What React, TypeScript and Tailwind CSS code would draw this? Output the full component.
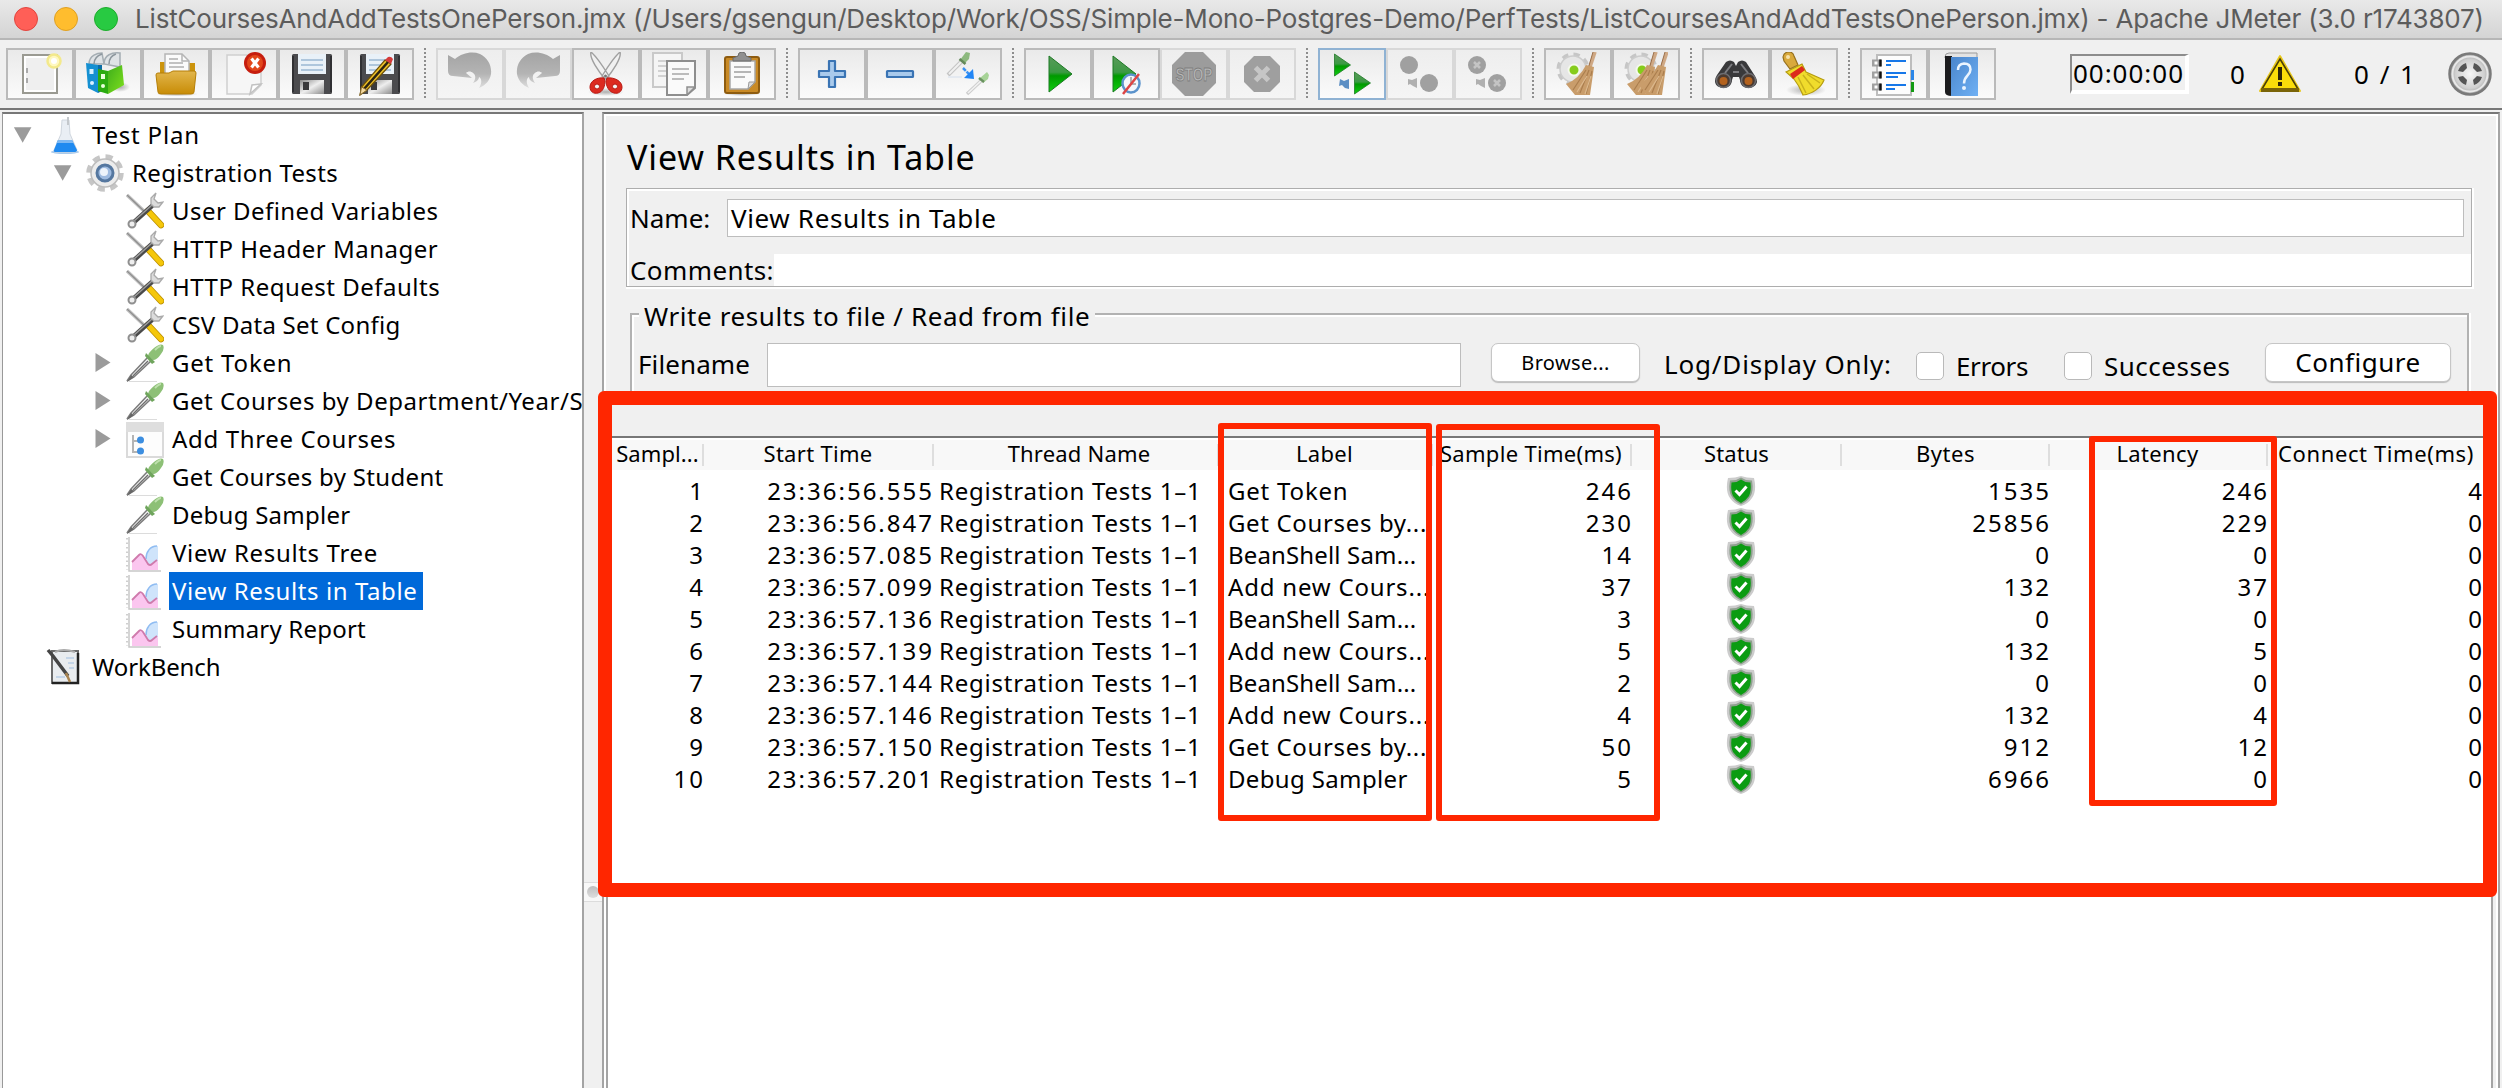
import React from 'react'
import type { ReactNode } from 'react'

/* ---------- shared gradients ---------- */
function Defs() {
  return (
    <svg className="absolute h-0 w-0" aria-hidden="true">
      <defs>
        <linearGradient id="green" x1="0" y1="0" x2="0" y2="1">
          <stop offset="0" stopColor="#5a9a5a" />
          <stop offset="0.45" stopColor="#3c9a44" />
          <stop offset="0.55" stopColor="#009a00" />
          <stop offset="1" stopColor="#10d010" />
        </linearGradient>
        <linearGradient id="folder" x1="0" y1="0" x2="0" y2="1">
          <stop offset="0" stopColor="#e2b64c" />
          <stop offset="1" stopColor="#c88c06" />
        </linearGradient>
        <linearGradient id="metal" x1="0" y1="0" x2="1" y2="1">
          <stop offset="0" stopColor="#8a8a8a" />
          <stop offset="0.5" stopColor="#eeeeee" />
          <stop offset="1" stopColor="#8c8c8c" />
        </linearGradient>
        <linearGradient id="arrowgray" x1="0" y1="0" x2="0" y2="1">
          <stop offset="0" stopColor="#a4a4a4" />
          <stop offset="0.6" stopColor="#b4b4b4" />
          <stop offset="1" stopColor="#dedede" />
        </linearGradient>
        <linearGradient id="book" x1="0" y1="0" x2="1" y2="1">
          <stop offset="0" stopColor="#4a86cc" />
          <stop offset="1" stopColor="#6fb0f4" />
        </linearGradient>
        <linearGradient id="binder" x1="0" y1="0" x2="1" y2="1">
          <stop offset="0" stopColor="#3fae1c" />
          <stop offset="1" stopColor="#7fe01c" />
        </linearGradient>
        <radialGradient id="ball">
          <stop offset="0" stopColor="#f6f6f6" />
          <stop offset="0.7" stopColor="#d0d0d0" />
          <stop offset="1" stopColor="#9a9a9a" />
        </radialGradient>
        <radialGradient id="shadow">
          <stop offset="0" stopColor="#000" stopOpacity="0.3" />
          <stop offset="1" stopColor="#000" stopOpacity="0" />
        </radialGradient>
      </defs>
    </svg>
  )
}

function Icon({ children }: { children: ReactNode }) {
  return (
    <svg viewBox="0 0 44 44" className="h-11 w-11" fill="none">
      {children}
    </svg>
  )
}

/* ---------- toolbar icons ---------- */
const NewIcon = () => (
  <Icon>
    <rect x="5" y="3" width="34" height="38" fill="#fff" stroke="#9a9a92" strokeWidth="2" />
    <rect x="8" y="6" width="28" height="32" fill="#efefef" />
    <path d="M9 16v5M9 26v5" stroke="#aaa" strokeWidth="2" />
    <circle cx="36" cy="9" r="6.500" fill="#fff8c0" stroke="#f3e98c" strokeWidth="2.500" />
    <circle cx="36" cy="9" r="3" fill="#fff" />
  </Icon>
)
const TemplatesIcon = () => (
  <Icon>
    <ellipse cx="34" cy="35" rx="10" ry="5" fill="url(#shadow)" />
    <path d="M3 12C3 3 12 1 16 1l2 11zM18 12C18 3 26 0 34 1v14z" fill="#dfe3e6" stroke="#a4adb3" strokeWidth="1.5" />
    <path d="M8 12c0-6 5-9 8-10M23 12c0-6 4-9 7-10" stroke="#8d979e" strokeWidth="1.5" />
    <path d="M0 11l12 2v28L2 36z" fill="#1590d2" />
    <path d="M12 13h4v26l-4 2z" fill="#0b6ca6" />
    <rect x="3.5" y="17" width="4" height="5" fill="#d8f0ff" />
    <circle cx="6" cy="31" r="2" fill="#d8f0ff" />
    <path d="M12 17l10 2v23l-10-3z" fill="#2cab10" />
    <path d="M22 19l14-6 2 20-16 9z" fill="url(#binder)" />
    <rect x="15" y="22" width="4" height="5" fill="#eaffdc" />
    <circle cx="17" cy="34" r="2" fill="#eaffdc" />
  </Icon>
)
const OpenIcon = () => (
  <Icon>
    <ellipse cx="23" cy="42" rx="21" ry="2.5" fill="url(#shadow)" />
    <path d="M6 10h7v4h22v-3h6v18H6z" fill="#cc940c" />
    <path d="M11 2h17l7 7v15H11z" fill="#fbfbfb" stroke="#b5b5b5" strokeWidth="1.5" />
    <path d="M28 2v7h7" stroke="#b5b5b5" strokeWidth="1.5" />
    <path d="M15 7h9M15 11h14M15 15h15" stroke="#b0b0b0" strokeWidth="1.6" />
    <path d="M2 23q0-2 2-2h11l4-2h21q2 0 2 2l-2 19q0 2-3 2H7q-3 0-3-2z" fill="url(#folder)" stroke="#b57f08" />
  </Icon>
)
const CloseIcon = () => (
  <Icon>
    <path d="M5 3h34v30l-9 9H5z" fill="#f6f6f6" stroke="#cfcfcf" strokeWidth="1.5" />
    <path d="M28 42l2-9 9-1z" fill="#fff" stroke="#c2c2c2" strokeWidth="1.5" />
    <circle cx="33" cy="11" r="11" fill="#c61d0e" />
    <circle cx="33" cy="11" r="8" fill="#e2471b" />
    <path d="M29.5 6.5l7 9M36.5 6.5l-7 9" stroke="#fff" strokeWidth="3.2" />
  </Icon>
)
const Floppy = () => (
  <>
    <rect x="2" y="2" width="40" height="40" rx="1.5" fill="#4b4b4e" />
    <path d="M3 4v36M41 4v36" stroke="#303033" strokeWidth="2" />
    <rect x="8" y="2" width="28" height="20" fill="#e9f1f8" />
    <path d="M11 8h22M11 13h22M11 18h22" stroke="#aec6dc" strokeWidth="1.8" />
    <rect x="10" y="28" width="24" height="14" fill="url(#metal)" />
    <rect x="13" y="30" width="6" height="8" fill="#3a3a3c" />
  </>
)
const SaveIcon = () => (
  <Icon>
    <Floppy />
  </Icon>
)
const SaveAsIcon = () => (
  <Icon>
    <Floppy />
    <path d="M27 8l6 4L9 38l-7 5 1.500-8z" fill="#f0c228" stroke="#6d5008" strokeWidth="1.2" />
    <path d="M30 10L6 37" stroke="#2c2410" strokeWidth="2.6" />
    <path d="M27 8l3-3q3-1 5 2l-2 5z" fill="#d63a3a" />
    <path d="M3.500 35L9 38l-7 5z" fill="#f3d9a0" stroke="#8a6c30" />
  </Icon>
)
const UndoShape = () => (
  <path
    d="M0 3l7 4C14 1 24-1 32 2c8 4 12 12 11 20-1 6-5 11-12 14 3-5 3-9 0-11 0 3-3 5-6 6 3-4 3-8 0-10-2-2-5-2-7 0l6 5L5 24Q0 24 0 19z"
    fill="url(#arrowgray)"
  />
)
const UndoIcon = () => (
  <Icon>
    <UndoShape />
  </Icon>
)
const RedoIcon = () => (
  <Icon>
    <g transform="translate(44 0) scale(-1 1)">
      <UndoShape />
    </g>
  </Icon>
)
const CutIcon = () => (
  <Icon>
    <ellipse cx="22" cy="40" rx="18" ry="4" fill="url(#shadow)" />
    <path d="M7 0c-2 6 8 20 14 27l4-3C20 16 13 5 7 0zM36 0c2 6-8 20-14 27l-4-3C23 16 30 5 36 0z" fill="#f1f1f1" stroke="#a0a0a0" strokeWidth="1.4" />
    <circle cx="21.500" cy="24" r="1.500" fill="#777" />
    <path d="M20 26c-7-1-14 3-14 9 0 5 4 7 8 6 5-1 7-7 7-12zM23 26c7-1 15 3 15 9 0 5-4 7-8 6-5-1-8-7-8-12z" fill="#dc2a20" stroke="#b81a14" />
    <circle cx="13" cy="34.500" r="2.500" fill="#f3f3f3" stroke="#b81a14" />
    <circle cx="31" cy="34.500" r="2.500" fill="#f3f3f3" stroke="#b81a14" />
  </Icon>
)
const CopyIcon = () => (
  <Icon>
    <rect x="1" y="1" width="29" height="34" fill="#f5f5f5" stroke="#c9c9c9" strokeWidth="2" />
    <path d="M6 9h18M6 14h18M6 19h10M6 24h10" stroke="#d2d2d2" strokeWidth="2" />
    <path d="M15 9h28v27l-8 7H15z" fill="#fafafa" stroke="#8e8e8e" strokeWidth="2" />
    <path d="M20 17h17M20 22h17M20 27h12" stroke="#bcbcbc" strokeWidth="2" />
    <path d="M35 43v-8h8z" fill="#dcdcdc" stroke="#8e8e8e" strokeWidth="1.500" />
  </Icon>
)
const PasteIcon = () => (
  <Icon>
    <ellipse cx="22" cy="42" rx="18" ry="2" fill="url(#shadow)" />
    <rect x="5" y="5" width="34" height="36" rx="2" fill="#c98a25" stroke="#8e5c10" strokeWidth="2" />
    <path d="M10 9h25v21l-7 7H10z" fill="#fafafa" stroke="#a8a8a8" strokeWidth="1.500" />
    <path d="M14 15h17M14 20h17M14 25h11" stroke="#b6b6b6" strokeWidth="2" />
    <path d="M28 37l1-7h6z" fill="#ddd" stroke="#9a9a9a" />
    <path d="M13 9V6l5-2q0-4 4-4t4 4l5 2v3z" fill="#909090" stroke="#6d6d6d" />
  </Icon>
)
const PlusIcon = () => (
  <Icon>
    <path d="M19 9h6v10h10v6H25v10h-6V25H9v-6h10z" fill="#a9caec" stroke="#3a74b4" strokeWidth="2.200" strokeLinejoin="round" />
  </Icon>
)
const MinusIcon = () => (
  <Icon>
    <rect x="9" y="19" width="26" height="6" rx="0.500" fill="#a9caec" stroke="#3a74b4" strokeWidth="2.200" />
  </Icon>
)
const ToggleIcon = () => (
  <Icon>
    <path d="M17 8L2 23" stroke="#c4c4c4" strokeWidth="4" />
    <path d="M17 8L3 22" stroke="#f0f0f0" strokeWidth="2" />
    <path d="M14 8l6-8 4 1-1 6-5 5z" fill="#8db97e" />
    <path d="M13.500 7l6 5" stroke="#64895a" strokeWidth="2.500" />
    <path d="M2 25h14" stroke="#e4e9f0" strokeWidth="2" />
    <path d="M17 16l7 7" stroke="#3d93f2" strokeWidth="2.500" strokeDasharray="4 1" />
    <path d="M28 27l-10-1 9-9z" fill="#2186f5" />
    <path d="M36 28L21 42" stroke="#cdcdcd" strokeWidth="3.500" />
    <path d="M36 28L22 41" stroke="#f2f2f2" strokeWidth="1.600" />
    <path d="M34 26l7-6 2 3-1 4-5 4z" fill="#a7d397" />
    <path d="M33 26l5 4" stroke="#6a9160" strokeWidth="2.500" />
  </Icon>
)
const StartIcon = () => (
  <Icon>
    <path d="M13 4l23 18-23 18z" fill="url(#green)" stroke="#1d7a24" strokeWidth="1" />
  </Icon>
)
const StartNoPauseIcon = () => (
  <Icon>
    <path d="M9 4l23 18L9 40z" fill="url(#green)" stroke="#1d7a24" strokeWidth="1" />
    <ellipse cx="27" cy="31.500" rx="8.500" ry="9" fill="#f3f7fc" stroke="#5b93cc" strokeWidth="2.500" />
    <path d="M27 25v7h5" stroke="#9a9a9a" strokeWidth="1.500" />
    <path d="M35 22L19 42" stroke="#dd4545" strokeWidth="2.500" />
  </Icon>
)
const StopIcon = () => (
  <Icon>
    <path d="M13 0h18l13 13v18L31 44H13L0 31V13z" fill="#9c9c9c" />
    <text x="22" y="29" textAnchor="middle" textLength="37" lengthAdjust="spacingAndGlyphs" fontSize="19" fontWeight="700" fontFamily="Liberation Sans, sans-serif" fill="#b8b8b8" stroke="#7e7e7e" strokeWidth="0.900">
      STOP
    </text>
  </Icon>
)
const ShutdownIcon = () => (
  <Icon>
    <path d="M14 4h16l10 10v16L30 40H14L4 30V14z" fill="#9f9f9f" />
    <path d="M15.500 15.500l13 13M28.500 15.500l-13 13" stroke="#c6c6c6" strokeWidth="5" />
  </Icon>
)
const RemoteStartIcon = () => (
  <Icon>
    <path d="M4.500 2l16 11-16 11z" fill="url(#green)" stroke="#1d7a24" strokeWidth="0.800" />
    <path d="M24.500 20l16 11-16 11z" fill="url(#green)" stroke="#1d7a24" strokeWidth="0.800" />
    <path d="M10 27l4 2 5-2v10l-4-1-3-3-3 1z" fill="#5d8fc4" />
  </Icon>
)
const RemoteStopIcon = () => (
  <Icon>
    <circle cx="11" cy="13" r="9" fill="#a0a0a0" />
    <circle cx="31" cy="31" r="9" fill="#a0a0a0" />
    <path d="M10 27l4 1 5-2v10l-4-2-3-2-2 1z" fill="#b0b0b0" />
  </Icon>
)
const RemoteShutdownIcon = () => (
  <Icon>
    <circle cx="11" cy="13" r="9" fill="#a0a0a0" />
    <circle cx="31" cy="31" r="9" fill="#a0a0a0" />
    <path d="M8 10l6 6M14 10l-6 6M28 28l6 6M34 28l-6 6" stroke="#c4c4c4" strokeWidth="2.500" />
    <path d="M10 27l4 1 5-2v10l-4-2-3-2-2 1z" fill="#b0b0b0" />
  </Icon>
)
const GearBack = () => (
  <>
    <circle cx="17" cy="17" r="14" stroke="#c6c6c6" strokeWidth="5" strokeDasharray="6 5" />
    <circle cx="17" cy="17" r="13" fill="#e6e6e6" stroke="#cccccc" strokeWidth="1.500" />
    <circle cx="18" cy="18" r="5.500" fill="#86cc1c" stroke="#f4f8ec" strokeWidth="2" />
  </>
)
const Broom = () => (
  <>
    <path d="M39 0l-6 18" stroke="#cfa884" strokeWidth="3.500" />
    <path d="M37 0l-5 17" stroke="#9a6e4a" strokeWidth="1" />
    <path d="M30 13l8 2-4 28H19l-9-11q13-5 20-19z" fill="#c99d6b" />
    <path d="M30 18L17 38M33 18l-9 23M36 19l-6 23" stroke="#ab7e4e" strokeWidth="1.200" />
    <path d="M31 24l-10 16M35 24l-6 18" stroke="#dcb98e" strokeWidth="1.200" />
  </>
)
const ClearIcon = () => (
  <Icon>
    <GearBack />
    <Broom />
  </Icon>
)
const ClearAllIcon = () => (
  <Icon>
    <GearBack />
    <g transform="translate(-7 0)">
      <Broom />
    </g>
    <g transform="translate(4 0)">
      <Broom />
    </g>
  </Icon>
)
const BinocularsIcon = () => (
  <Icon>
    <path d="M12 10q4-3 8 0l2 4 2-4q4-3 8 0l9 14q2 3 2 6c-1 4-5 6-9 6s-8-3-8-8l-1-3h-6l-1 3c0 5-4 8-8 8s-9-2-9-7q0-3 2-6z" fill="#39393b" />
    <path d="M18 12l-7 9M27 12l7 9M19 20h6" stroke="#7c7c80" strokeWidth="2" />
    <circle cx="9.500" cy="28.500" r="7" fill="#4b3a30" stroke="#6c6c70" strokeWidth="1.500" />
    <circle cx="34.500" cy="28.500" r="7" fill="#4b3a30" stroke="#6c6c70" strokeWidth="1.500" />
    <circle cx="9.500" cy="29" r="4" fill="#b3621e" />
    <circle cx="34.500" cy="29" r="4" fill="#b3621e" />
  </Icon>
)
const SearchResetIcon = () => (
  <Icon>
    <ellipse cx="24" cy="38" rx="20" ry="6" fill="url(#shadow)" />
    <path d="M1 5q1-5 6-5 4 0 5 4l4 9-8 4-6-8z" fill="#d9a93c" stroke="#96701c" strokeWidth="1.200" />
    <circle cx="6" cy="5" r="2" fill="#f7e2a8" />
    <path d="M4 20l16-8 4 8 18 8c-3 8-12 14-21 15-2-5-5-11-9-16z" fill="#f0dc2c" stroke="#b59c10" strokeWidth="1.200" />
    <path d="M16 25l8 16M21 23l11 14M25 22l13 9" stroke="#c9b21c" strokeWidth="1.500" />
    <path d="M8 22l12-8 3 4-12 9z" fill="#dc2b1c" />
  </Icon>
)
const ListIcon = () => (
  <Icon>
    <rect x="5" y="3" width="34" height="40" fill="#fdfdfd" stroke="#bdbdbd" strokeWidth="2" />
    <path d="M39 18h3v10h-3z" fill="#2a86e8" />
    <path d="M39 30h3v10h-3z" fill="#129a12" />
    <path d="M14 9h20M14 13h5M14 21h20M14 25h12M14 33h20M14 37h9" stroke="#1677e8" strokeWidth="2" />
    <path d="M0 11h9M0 23h9M0 35h9" stroke="#a0a0a0" strokeWidth="7" />
    <path d="M2.500 11h3M2.500 23h3M2.500 35h3" stroke="#fff" strokeWidth="3" />
    <path d="M8.500 7.500v7M8.500 19.500v7M8.500 31.500v7" stroke="#111" strokeWidth="2.500" />
  </Icon>
)
const HelpIcon = () => (
  <Icon>
    <path d="M5 5q0-4 4-4h28v5H5z" fill="#e3e3e3" stroke="#9b9b9b" />
    <path d="M5 4h7v40q-7 0-7-4z" fill="#1c1c1e" />
    <path d="M11 5h27v39H11z" fill="url(#book)" />
    <path d="M18 18q0-6 6-6.500 6.500 0 6.500 6c0 6-6.500 6-6.500 14" stroke="#eaf4ff" strokeWidth="2.500" />
    <circle cx="24" cy="36" r="2" fill="#eaf4ff" />
  </Icon>
)

type Tool = { icon: () => React.JSX.Element; off?: boolean; focus?: boolean }
const toolGroups: Tool[][] = [
  [{ icon: NewIcon }, { icon: TemplatesIcon }, { icon: OpenIcon }, { icon: CloseIcon }, { icon: SaveIcon }, { icon: SaveAsIcon }],
  [{ icon: UndoIcon, off: true }, { icon: RedoIcon, off: true }, { icon: CutIcon }, { icon: CopyIcon }, { icon: PasteIcon }],
  [{ icon: PlusIcon }, { icon: MinusIcon }, { icon: ToggleIcon }],
  [{ icon: StartIcon }, { icon: StartNoPauseIcon }, { icon: StopIcon, off: true }, { icon: ShutdownIcon, off: true }],
  [{ icon: RemoteStartIcon, focus: true }, { icon: RemoteStopIcon, off: true }, { icon: RemoteShutdownIcon, off: true }],
  [{ icon: ClearIcon }, { icon: ClearAllIcon }],
  [{ icon: BinocularsIcon }, { icon: SearchResetIcon }],
  [{ icon: ListIcon }, { icon: HelpIcon }],
]

function ToolButton({ tool }: { tool: Tool }) {
  const look = tool.focus
    ? 'border-[#8fb2d3] bg-linear-to-b from-[#eaeaea] to-[#fbfbfb]'
    : tool.off
      ? 'border-[#d8d8d8] bg-linear-to-b from-[#eeeeee] to-[#f5f5f5]'
      : 'border-[#bababa] bg-linear-to-b from-[#eaeaea] to-[#fbfbfb]'
  return (
    <button className={`flex h-[52px] w-[68px] items-center justify-center border-2 ${look}`}>
      <tool.icon />
    </button>
  )
}

function Separator() {
  return (
    <div className="flex h-[50px] w-[22px] flex-col items-center gap-[2px] overflow-hidden">
      {Array.from({ length: 13 }, (_, i) => (
        <i key={i} className="h-[2px] w-[2px] shrink-0 bg-[#8d8d8d]" />
      ))}
    </div>
  )
}

function Toolbar() {
  return (
    <div className="flex h-[68px] shrink-0 items-start pt-2 pl-[6px]">
      {toolGroups.map((g, i) => (
        <React.Fragment key={i}>
          {i > 0 && <Separator />}
          <div className="flex">
            {g.map((t, j) => (
              <ToolButton key={j} tool={t} />
            ))}
          </div>
        </React.Fragment>
      ))}
      <div className="ml-[74px] flex h-[52px] items-center text-[26px] leading-[38px]">
        <div className="flex h-[40px] w-[119px] items-center justify-center border-t-2 border-r-4 border-b-4 border-l-2 border-t-[#8c8c8c] border-r-white border-b-white border-l-[#8c8c8c] tracking-[1px]">
          00:00:00
        </div>
        <span className="ml-[41px] w-[28px]">0</span>
        <svg viewBox="0 0 44 40" className="h-10 w-11" fill="none">
          <path d="M22 2L42 37H2z" fill="#f7d808" stroke="#e8c81c" strokeWidth="2" strokeLinejoin="round" />
          <path d="M22 5L40 35H4z" fill="#fadd0a" stroke="#4a3e08" strokeWidth="1.600" />
          <path d="M3 36h38" stroke="#7a6408" strokeWidth="4" />
          <path d="M22 13v13" stroke="#2c2408" strokeWidth="4" />
          <path d="M22 28v4" stroke="#2c2408" strokeWidth="4" />
        </svg>
        <span className="ml-[52px] w-[94px] tracking-[2px]">0 / 1</span>
        <svg viewBox="0 0 44 44" className="h-11 w-11" fill="none">
          <circle cx="22" cy="22" r="20.500" fill="url(#ball)" stroke="#7a7a7a" strokeWidth="2.500" />
          <circle cx="22" cy="22" r="17.500" stroke="#e8e8e8" strokeWidth="2" />
          <path d="M10 19q2-6 8-8l1 5-4 4zM34 19q-2-6-8-8l-1 5 4 4zM10 25q2 6 8 8l1-5-4-4zM34 25q-2 6-8 8l-1-5 4-4z" fill="#555" />
        </svg>
      </div>
    </div>
  )
}

/* ---------- tree ---------- */
function TreeSvg({ children }: { children: ReactNode }) {
  return (
    <svg viewBox="0 0 38 38" className="h-[38px] w-[38px] shrink-0" fill="none">
      {children}
    </svg>
  )
}
const treeIcons: Record<string, ReactNode> = {
  flask: (
    <TreeSvg>
      <ellipse cx="19" cy="36" rx="14" ry="2" fill="#6fa6de" opacity="0.600" />
      <path d="M16 4h7l1 14 7 16q0 2-3 2H10q-3 0-2-2l7-16z" fill="#e9eef4" stroke="#cfd6de" />
      <path d="M12 24h14l5 10q0 2-3 2H10q-3 0-2-2z" fill="#1f8af0" />
      <path d="M12 24h14l1.500 3H10.500z" fill="#7db8f2" />
      <path d="M22 1v8" stroke="#c4c8cc" strokeWidth="2" />
    </TreeSvg>
  ),
  gear: (
    <TreeSvg>
      <circle cx="19" cy="19" r="16" stroke="#c6c6c6" strokeWidth="5.500" strokeDasharray="7 5.570" />
      <circle cx="19" cy="19" r="14" fill="#ececec" stroke="#bdbdbd" strokeWidth="1.500" />
      <circle cx="19" cy="19" r="8" fill="#9fbbe0" stroke="#55779f" strokeWidth="3" />
      <circle cx="18" cy="18" r="4" fill="#eef4fb" />
    </TreeSvg>
  ),
  tools: (
    <TreeSvg>
      <path d="M1 3l18 17" stroke="#c4c4c4" strokeWidth="3.500" />
      <path d="M1 3l18 17" stroke="#8e8e8e" strokeWidth="1.200" />
      <path d="M22 19l13 14" stroke="#b98d00" strokeWidth="6.500" strokeLinecap="round" />
      <path d="M22 19l13 14" stroke="#f5c70a" strokeWidth="5" strokeLinecap="round" />
      <path d="M27 13L7 31" stroke="#4a4a4a" strokeWidth="4.500" />
      <path d="M26 13L8 29" stroke="#9c9c9c" strokeWidth="1.500" />
      <circle cx="6" cy="32" r="3.500" fill="#eee" stroke="#8f8f8f" strokeWidth="2" />
      <path d="M30 1l-5 5v6l3 3h5l4-5-5 1-4-4z" fill="#dcdcdc" stroke="#aaa" strokeWidth="1.300" />
    </TreeSvg>
  ),
  dropper: (
    <TreeSvg>
      <path d="M3 38h28" stroke="#dcdcdc" strokeWidth="2" />
      <path d="M22 13L5 31l-4 6 7-4 18-17z" fill="#f4f4f4" stroke="#7c7c7c" strokeWidth="1.500" />
      <path d="M22 17L7 32" stroke="#6e6e6e" strokeWidth="1.500" />
      <path d="M1 38l4-7 3 2z" fill="#666" />
      <path d="M22 12q0-3 6-8 6-5 9-3 2 4-2 9-4 6-8 6z" fill="#8dc076" />
      <path d="M20 9l9 9-3 2-7-8z" fill="#6fa55c" />
      <path d="M29 6q4-4 6-4" stroke="#bfe0ae" strokeWidth="2" />
    </TreeSvg>
  ),
  controller: (
    <TreeSvg>
      <rect x="1" y="3" width="36" height="34" fill="#fdfdfd" stroke="#dadada" strokeWidth="2" />
      <rect x="0" y="2" width="38" height="10" fill="#dedede" />
      <path d="M7 15v17h5M7 21h5" stroke="#b4b4b4" strokeWidth="2" />
      <circle cx="14.500" cy="20" r="3.500" fill="#3c8ee0" />
      <circle cx="14.500" cy="31" r="3.500" fill="#3c8ee0" />
    </TreeSvg>
  ),
  chart: (
    <TreeSvg>
      <path d="M3 3v34h32" stroke="#c8c8c8" strokeWidth="1.500" />
      <path d="M1 4v32" stroke="#cfcfcf" strokeWidth="2" strokeDasharray="1.500 3" />
      <path d="M32 12c-8 0-12 6-12 15l4 4 8-4z" fill="#cfe4fb" />
      <path d="M31 12c-7 0-11 6-11 13" stroke="#8fbcf2" strokeWidth="1.500" />
      <path d="M6 28l8-8 5 4 4 8 9-5v9H6z" fill="#fbc6ef" />
      <path d="M6 28l7-7q2-2 4 1l5 8q2 2 4 0l5-4" stroke="#cf7aac" strokeWidth="1.800" />
    </TreeSvg>
  ),
  workbench: (
    <TreeSvg>
      <path d="M6 3h26v32H6z" fill="#e9ecef" stroke="#6a6a6a" strokeWidth="2" />
      <path d="M32 5v30H6" stroke="#222" strokeWidth="2.500" />
      <path d="M9 4q8-4 20 0" stroke="#aaa" strokeWidth="2" />
      <path d="M20 10h8M22 15h6M23 20h5M10 29h9" stroke="#b8cde6" strokeWidth="1.500" />
      <path d="M2 2l5 6 15 20" stroke="#454545" strokeWidth="3.500" />
      <path d="M20 25l4 9" stroke="#a98450" strokeWidth="2.500" />
    </TreeSvg>
  ),
}

type Node = { label: string; icon: string; level: 0 | 1 | 2; fit: string; arrow?: 'down' | 'right'; selected?: boolean }
const nodes: Node[] = [
  { label: 'Test Plan', icon: 'flask', level: 0, fit: 'tracking-[0.800px]', arrow: 'down' },
  { label: 'Registration Tests', icon: 'gear', level: 1, fit: 'tracking-[0.350px]', arrow: 'down' },
  { label: 'User Defined Variables', icon: 'tools', level: 2, fit: 'tracking-[0.450px]' },
  { label: 'HTTP Header Manager', icon: 'tools', level: 2, fit: 'tracking-[0.500px]' },
  { label: 'HTTP Request Defaults', icon: 'tools', level: 2, fit: 'tracking-[0.500px]' },
  { label: 'CSV Data Set Config', icon: 'tools', level: 2, fit: 'tracking-[0.250px]' },
  { label: 'Get Token', icon: 'dropper', level: 2, fit: 'tracking-[0.800px]', arrow: 'right' },
  { label: 'Get Courses by Department/Year/Semester', icon: 'dropper', level: 2, fit: 'tracking-[0.550px]', arrow: 'right' },
  { label: 'Add Three Courses', icon: 'controller', level: 2, fit: 'tracking-[0.650px]', arrow: 'right' },
  { label: 'Get Courses by Student', icon: 'dropper', level: 2, fit: 'tracking-[0.330px]' },
  { label: 'Debug Sampler', icon: 'dropper', level: 2, fit: 'tracking-[0.250px]' },
  { label: 'View Results Tree', icon: 'chart', level: 2, fit: 'tracking-[0.650px]' },
  { label: 'View Results in Table', icon: 'chart', level: 2, fit: 'tracking-[0.600px]', selected: true },
  { label: 'Summary Report', icon: 'chart', level: 2, fit: 'tracking-[0.200px]' },
  { label: 'WorkBench', icon: 'workbench', level: 0, fit: 'tracking-[-0.100px]' },
]
const indent = { 0: 'pl-[8px]', 1: 'pl-[48px]', 2: 'pl-[88px]' }

function Tree() {
  return (
    <div className="ml-[2px] w-[582px] shrink-0 overflow-hidden border-t-2 border-r-2 border-l border-t-[#777] border-r-[#a4a4a4] border-l-[#999] bg-white pt-[2px] text-[24px] leading-[38px]">
      {nodes.map((n) => (
        <div key={n.label} className={`flex h-[38px] overflow-hidden whitespace-nowrap ${indent[n.level]}`}>
          <svg viewBox="0 0 36 38" className={`h-[38px] shrink-0 ${n.level === 2 ? '-ml-[4px] w-[39px]' : 'w-[35px]'}`} fill="#9b9b9b">
            {n.arrow === 'down' && <path d="M3 11h18l-9 16z" />}
            {n.arrow === 'right' && <path d="M7 9l15 9.500L7 28z" />}
          </svg>
          {treeIcons[n.icon]}
          <span className={`ml-[5px] shrink-0 px-[3px] ${n.fit} ${n.selected ? 'bg-[#0069d9] pr-[6px] text-white' : ''}`}>{n.label}</span>
        </div>
      ))}
    </div>
  )
}

/* ---------- results table ---------- */
type Row = [number, string, string, number, number, number]
const rows: Row[] = [
  [1, '23:36:56.555', 'Get Token', 246, 1535, 246],
  [2, '23:36:56.847', 'Get Courses by...', 230, 25856, 229],
  [3, '23:36:57.085', 'BeanShell Sam...', 14, 0, 0],
  [4, '23:36:57.099', 'Add new Cours...', 37, 132, 37],
  [5, '23:36:57.136', 'BeanShell Sam...', 3, 0, 0],
  [6, '23:36:57.139', 'Add new Cours...', 5, 132, 5],
  [7, '23:36:57.144', 'BeanShell Sam...', 2, 0, 0],
  [8, '23:36:57.146', 'Add new Cours...', 4, 132, 4],
  [9, '23:36:57.150', 'Get Courses by...', 50, 912, 12],
  [10, '23:36:57.201', 'Debug Sampler', 5, 6966, 0],
]
const labelFit: Record<string, string> = {
  'Get Token': 'tracking-[0.800px]',
  'Get Courses by...': 'tracking-[0.650px]',
  'BeanShell Sam...': 'tracking-[0.150px]',
  'Add new Cours...': 'tracking-[0.800px]',
  'Debug Sampler': 'tracking-[0.350px]',
}
const headers = [
  ['Sampl...', 'pl-[5px] tracking-[0.100px]'],
  ['Start Time', 'pl-px tracking-[0.300px]'],
  ['Thread Name', 'pl-[8px] tracking-[0.200px]'],
  ['Label', 'tracking-[0.300px]'],
  ['Sample Time(ms)', 'tracking-[0.300px]'],
  ['Status', 'pl-[2px] tracking-[0.100px]'],
  ['Bytes', 'pl-[2px]'],
  ['Latency', 'tracking-[0.350px]'],
  ['Connect Time(ms)', 'pl-px tracking-[0.600px]'],
]
const cols = 'grid grid-cols-[95px_230px_285px_214px_199px_210px_208px_218px_218px]'

const Num = ({ children }: { children: ReactNode }) => <span className="-mr-[2px] text-right tracking-[2px]">{children}</span>

const Shield = () => (
  <svg viewBox="0 0 30 30" className="ml-[95px] mt-px h-[30px] w-[30px]" fill="none">
    <path d="M15 0l6 1.500 7 .5q3 13-2 20-4 6-11 8-7-2-11-8Q-1 15 2 2l7-.5z" fill="#cccccc" />
    <path d="M15 1.500l5 2.500 6 .5q2 11-2 16.500-3 5-9 7.500-6-2.500-9-7.500Q2 15.500 4 4.500L10 4z" fill="#8fa08f" />
    <path d="M15 3.500l4.500 2.500 5 .5q1 9-1.500 13.500-3 4.500-8 7-5-2.500-8-7Q4.500 15.500 5.500 6.500L10.500 6z" fill="#0b9c12" />
    <path d="M9.500 14.500l4 4 7-8" stroke="#fff" strokeWidth="3" />
  </svg>
)

function ResultsTable() {
  return (
    <div className="mr-[3px] flex-1 overflow-hidden border-t-2 border-r-2 border-l-2 border-t-[#777] border-r-[#a4a4a4] border-l-[#a4a4a4] bg-white pt-[2px]">
      <div className={`${cols} h-[30px] bg-[#f8f8f8] text-center text-[22px] leading-[27px]`}>
        {headers.map(([h, fit]) => (
          <span key={h} className="flex h-[30px] items-center whitespace-nowrap">
            <span className={`flex-1 pb-[3px] ${fit}`}>{h}</span>
            <i className="-mr-px h-[22px] w-[2px] bg-[#dedede]" />
          </span>
        ))}
      </div>
      <div className="pt-[5px] text-[24px] leading-8">
        {rows.map(([n, time, label, sample, bytes, latency]) => (
          <div key={n} className={`${cols} h-8 whitespace-nowrap`}>
            <Num>{n}</Num>
            <span className="-mr-px text-right tracking-[2px]">{time}</span>
            <span className="pl-[6px] tracking-[0.780px]">Registration Tests 1–1</span>
            <span className={`pl-[10px] ${labelFit[label]}`}>{label}</span>
            <Num>{sample}</Num>
            <Shield />
            <Num>{bytes}</Num>
            <Num>{latency}</Num>
            <span className="mr-px text-right tracking-[2px]">{n === 1 ? 4 : 0}</span>
          </div>
        ))}
      </div>
    </div>
  )
}

/* ---------- right side form ---------- */
function Check({ label }: { label: string }) {
  return (
    <label className="mt-[9px] flex h-[28px] items-center gap-[12px]">
      <i className="h-[28px] w-[28px] rounded-[5px] border border-[#b9b9b9] bg-white" />
      {label}
    </label>
  )
}

function Editor() {
  return (
    <div className="flex w-[1898px] shrink-0 flex-col border-t-2 border-r-2 border-l-2 border-t-[#777] border-r-[#a4a4a4] border-l-[#a4a4a4]">
      <div className="flex flex-1 flex-col overflow-hidden border-t-2 border-r-2 border-l-2 border-white text-[26px] leading-[38px] tracking-[0.500px]">
        <h1 className="h-[72px] shrink-0 pt-[10px] pl-[21px] text-[34px] leading-[62px] tracking-[0.900px]">View Results in Table</h1>

        <div className="ml-[20px] h-[101px] w-[1848px] shrink-0 border-r-2 border-b-2 border-white">
          <div className="h-[99px] border border-[#adadad]">
            <div className="h-[97px] border-t-2 border-l-2 border-white">
              <div className="mt-[8px] flex h-[38px] pr-[7px]">
                <span className="w-[98px] pl-[1px] tracking-normal">Name:</span>
                <div className="flex-1 border border-[#bdbdbd] bg-white pl-[3px] leading-[36px] tracking-[0.640px]">View Results in Table</div>
              </div>
              <div className="mt-[17px] flex h-[32px]">
                <span className="w-[145px] pl-[1px] leading-[32px] tracking-[0.400px]">Comments:</span>
                <div className="flex-1 bg-white" />
              </div>
            </div>
          </div>
        </div>

        <fieldset className="mt-[4px] ml-[24px] h-[108px] w-[1839px] shrink-0 border-2 border-[#b2b2b2] shadow-[inset_2px_2px_0_#fff,2px_0_0_#fff]">
          <legend className="ml-[7px] h-[42px] bg-[#f0f0f0] px-[5px] pt-[4px] tracking-[0.580px]">Write results to file / Read from file</legend>
          <div className="flex items-start pt-[8px] pl-[6px]">
            <span className="w-[129px] pt-[2px] tracking-[0.100px]">Filename</span>
            <div className="h-[44px] w-[694px] border border-[#bdbdbd] bg-white" />
            <button className="ml-[30px] h-[39px] w-[149px] rounded-[7px] border border-[#c6c6c6] bg-white pb-px text-[20px] leading-[37px] tracking-[0.350px] shadow-[0_1px_1px_#bbb]">Browse...</button>
            <span className="ml-[24px] w-[252px] pt-[2px] tracking-[0.830px]">Log/Display Only:</span>
            <div className="w-[148px] tracking-[-0.400px]">
              <Check label="Errors" />
            </div>
            <div className="w-[201px]">
              <Check label="Successes" />
            </div>
            <button className="h-[39px] w-[186px] rounded-[7px] border border-[#c6c6c6] bg-white pb-px leading-[37px] shadow-[0_1px_1px_#bbb]">Configure</button>
          </div>
        </fieldset>
        <div className="mt-[35px] flex min-h-0 flex-1">
          <ResultsTable />
        </div>
      </div>
    </div>
  )
}

export default function App() {
  return (
    <div className="relative flex h-[1088px] w-[2502px] flex-col overflow-hidden bg-[#f0f0f0] font-['Noto_Sans',sans-serif] text-black">
      <Defs />
      <header className="flex h-[40px] shrink-0 items-center border-b-2 border-[#b6b6b6] bg-linear-to-b from-[#e9e9e9] to-[#d4d4d4] pb-px pl-[14px]">
        <i className="h-6 w-6 shrink-0 rounded-full border border-[#e2453e] bg-[#ff5f57]" />
        <i className="ml-4 h-6 w-6 shrink-0 rounded-full border border-[#dfa023] bg-[#ffbd2e]" />
        <i className="ml-4 h-6 w-6 shrink-0 rounded-full border border-[#1dad2c] bg-[#28ca42]" />
        <h1 className="ml-[17px] shrink-0 font-['Inter',sans-serif] text-[26px] leading-[37px] tracking-[-0.185px] whitespace-nowrap text-[#5c5c5c]">
          ListCoursesAndAddTestsOnePerson.jmx (/Users/gsengun/Desktop/Work/OSS/Simple-Mono-Postgres-Demo/PerfTests/ListCoursesAndAddTestsOnePerson.jmx) - Apache JMeter (3.0 r1743807)
        </h1>
      </header>
      <Toolbar />
      <div className="h-1 shrink-0 border-t-2 border-[#777]" />
      <main className="flex min-h-0 flex-1">
        <Tree />
        <div className="flex w-[18px] shrink-0 flex-col pt-[770px]">
          <div className="flex h-[20px] items-center justify-center border-y border-[#dcdcdc] bg-[#f8f8f8]">
            <i className="h-3 w-3 rounded-full bg-linear-to-b from-[#bdbdbd] to-[#dedede]" />
          </div>
        </div>
        <Editor />
      </main>

      {/* highlight frames drawn over the results */}
      <div className="absolute top-[391px] left-[598px] h-[506px] w-[1899px] rounded-[6px] border-[14px] border-[#ff2600]" />
      <div className="absolute top-[423px] left-[1218px] h-[398px] w-[214px] rounded-[3px] border-[6px] border-[#ff2600]" />
      <div className="absolute top-[424px] left-[1436px] h-[397px] w-[224px] rounded-[3px] border-[6px] border-[#ff2600]" />
      <div className="absolute top-[436px] left-[2089px] h-[370px] w-[188px] rounded-[3px] border-[6px] border-[#ff2600]" />
    </div>
  )
}
